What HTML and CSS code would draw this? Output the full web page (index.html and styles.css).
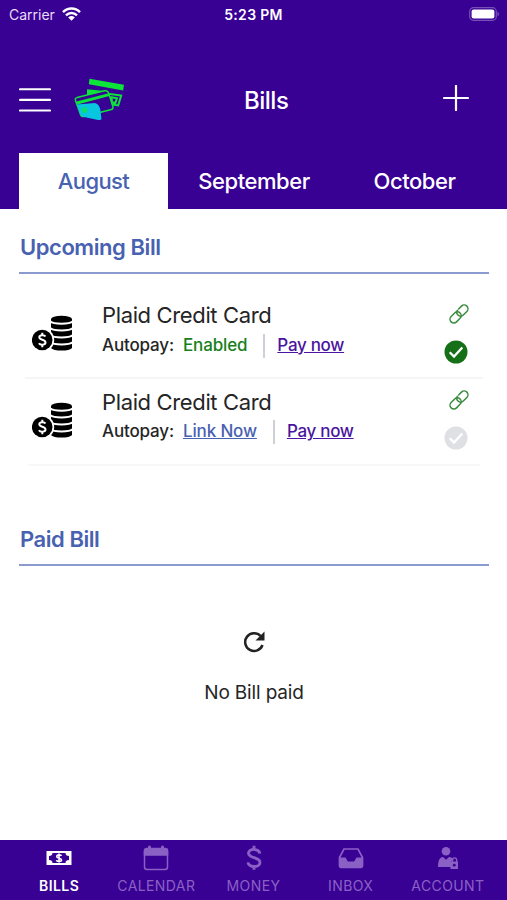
FILE: index.html
```html
<!DOCTYPE html>
<html lang="en">
<head>
<meta charset="utf-8">
<title>Bills</title>
<link rel="stylesheet" href="styles.css">
</head>
<body>
<svg class="defs" width="0" height="0" aria-hidden="true">
  <symbol id="coins" viewBox="0 0 42 38">
    <path d="M19 4v29c2 3.400 19 3.400 21 0V4z"/>
    <ellipse cx="29.500" cy="4.200" rx="10.500" ry="3.400"/>
    <path d="M18 6.200c4 3.300 19 3.300 23 0M18 13c4 3.300 19 3.300 23 0M18 20c4 3.300 19 3.300 23 0M18 27c4 3.300 19 3.300 23 0" fill="none" stroke="#fff" stroke-width="2.100"/>
    <circle cx="10.200" cy="25" r="12" fill="#fff"/>
    <circle cx="10.200" cy="25" r="10.300"/>
    <path d="M13.500 21.600c-1.200-2-6.200-1.800-6.200.7 0 3 6.200 2 6.200 5.200 0 2.600-5.200 2.900-6.600.7M10.300 17.800v2.500M10.300 29.600v2.600" fill="none" stroke="#fff" stroke-width="2"/>
  </symbol>
  <symbol id="chain" viewBox="0 0 22 22">
    <g fill="none" stroke="currentColor" stroke-width="1.500" stroke-linecap="round">
      <rect x="9.500" y="7.200" width="12.600" height="7.600" rx="3.800" transform="rotate(-45 11 11)" stroke-dasharray="31.500 2.200" stroke-dashoffset="-1"/>
      <rect x="-.1" y="7.200" width="12.600" height="7.600" rx="3.800" transform="rotate(-45 11 11)"/>
    </g>
  </symbol>
  <symbol id="check" viewBox="0 0 24 24">
    <circle cx="12" cy="12" r="11.500" fill="currentColor"/>
    <path d="M5.700 12.200l4.300 4.300 8.300-9.100" fill="none" stroke="#fff" stroke-width="2.300"/>
  </symbol>
</svg>

<header class="header">
  <div class="status">
    <div class="carrier">
      <span>Carrier</span>
      <svg width="19" height="14" viewBox="0 0 19 14" fill="none" stroke="#fff" stroke-width="2.500">
        <path d="M1 5.200c4.800-4.900 12.200-4.900 17 0M4 8.300c3.200-3.100 7.800-3.100 11 0"/>
        <path d="M6.200 10.400c2-1.800 4.600-1.800 6.600 0L9.500 13.800z" fill="#fff" stroke="none"/>
      </svg>
    </div>
    <span class="clock">5:23 PM</span>
    <svg class="battery" width="31" height="14" viewBox="0 0 31 14">
      <rect x=".7" y=".7" width="26.600" height="12.600" rx="3.800" fill="none" stroke="#7650b8" stroke-width="1.200"/>
      <rect x="2.600" y="2.600" width="22.800" height="8.800" rx="2" fill="#fff"/>
      <path d="M28.500 4.700c2 .8 2 3.800 0 4.600z" fill="#7650b8"/>
    </svg>
  </div>
  <div class="topbar">
    <div class="brand">
      <svg width="32" height="26" viewBox="0 0 32 26" stroke="#fff" stroke-width="2.100" stroke-linecap="round"><path d="M1 2.300h30M1 12.900h30M1 23.500h30"/></svg>
      <svg class="logo" width="52" height="46" viewBox="0 0 52 46">
        <path d="M15.500 1.800L50 7.700l-.8 5.800L14.800 7.300z" fill="#0ce43a"/>
        <path d="M13 12.200l18 1.700 4 3.800-22 2z" fill="#0ce43a"/>
        <path d="M34 16.700l13.200 1.800-3 10-6-.9M37.500 20.300l5.500 1-1.700 4.700-3.300-.7z" fill="none" stroke="#0ce43a" stroke-width="2"/>
        <path d="M3 20.600l27.500-6.800c2.300-.5 3.500.3 4.200 2.600l4.200 13.300c.5 1.500-.1 2.400-1.500 2.700L10 39.500c-2 .4-3-.3-3.600-2.300L1.500 23.500c-.5-1.700 0-2.500 1.500-2.900z" fill="#390094" stroke="#0ce43a" stroke-width="1.500"/>
        <path d="M3 26l32-8.400" stroke="#0ce43a" stroke-width="3"/>
        <path d="M3 27.500l18-1.500c3.300 1.200 4.700 3.600 5.300 6.500L27.500 42c-1 1.400-2.500 1.200-4.500.8l-13-2.800c-2.300-.5-3.800-2-4.500-4.500z" fill="#08c5e0"/>
        <circle cx="10.500" cy="33" r="3" fill="#0ddd70"/>
      </svg>
    </div>
    <h1 class="title">Bills</h1>
    <svg class="plus" width="26" height="26" viewBox="0 0 26 26" stroke="#fff" stroke-width="2.200" stroke-linecap="round"><path d="M13 1v24M1 13h24"/></svg>
  </div>
  <nav class="tabs">
    <a class="tab tab-active">August</a>
    <a class="tab">September</a>
    <a class="tab">October</a>
  </nav>
</header>

<main class="content">
  <h2 class="heading">Upcoming Bill</h2>
  <ul class="bills">
    <li class="bill">
      <svg class="coins" width="42" height="38"><use href="#coins"/></svg>
      <div class="info">
        <div class="name">Plaid Credit Card</div>
        <div class="meta"><span class="label">Autopay:</span><span class="enabled">Enabled</span><i class="bar"></i><a class="pay">Pay now</a></div>
      </div>
      <div class="marks">
        <svg class="chain" width="22" height="22"><use href="#chain"/></svg>
        <svg class="check done" width="24" height="24"><use href="#check"/></svg>
      </div>
    </li>
    <li class="bill last">
      <svg class="coins" width="42" height="38"><use href="#coins"/></svg>
      <div class="info">
        <div class="name">Plaid Credit Card</div>
        <div class="meta"><span class="label">Autopay:</span><a class="link">Link Now</a><i class="bar"></i><a class="pay">Pay now</a></div>
      </div>
      <div class="marks">
        <svg class="chain" width="22" height="22"><use href="#chain"/></svg>
        <svg class="check" width="24" height="24"><use href="#check"/></svg>
      </div>
    </li>
  </ul>
  <h2 class="heading paid">Paid Bill</h2>
  <div class="empty">
    <svg width="22" height="22" viewBox="0 0 22 22"><path d="M19.500 14A8.900 8.900 0 1 1 17.600 5" fill="none" stroke="#222" stroke-width="2.500"/><path d="M21.500.5v9h-9z" fill="#222"/></svg>
    <p>No Bill paid</p>
  </div>
</main>

<footer class="nav">
  <a class="item active">
    <svg width="26" height="28" viewBox="0 0 26 28"><path d="M.5 7h25v14H.5z" fill="#fff"/><path d="M6.500 9h13c0 1.800 1.300 3 3.500 3v4c-2.200 0-3.500 1.200-3.500 3h-13c0-1.800-1.300-3-3.500-3v-4c2.200 0 3.500-1.200 3.500-3z" fill="#390094"/><path d="M15.500 11.900c-1-1.500-4.800-1.300-4.800.5 0 2.300 4.800 1.300 4.800 3.500 0 1.900-4 2-5.200.3M13 9.600v8.800" fill="none" stroke="#fff" stroke-width="1.600"/></svg>
    <span>BILLS</span>
  </a>
  <a class="item">
    <svg width="26" height="28" viewBox="0 0 26 28" fill="none" stroke="currentColor" stroke-width="1.500"><rect x="1.500" y="5" width="23" height="20.500" rx="2.500"/><path d="M3.500 4.500h19a2 2 0 0 1 2 2V11h-23V6.500a2 2 0 0 1 2-2z" fill="currentColor"/><path d="M6.500 3v3M19.500 3v3" stroke-width="3" stroke-linecap="round"/></svg>
    <span>CALENDAR</span>
  </a>
  <a class="item">
    <svg width="26" height="28" viewBox="0 0 26 28" fill="none" stroke="currentColor" stroke-width="2.900"><path d="M18.800 9.600C18 4 7.500 4.200 7.500 9.200c0 5.500 11.500 3.500 11.500 9.200 0 5.300-11.500 5.500-12 0M13 1.800v4M13 21.800v4"/></svg>
    <span>MONEY</span>
  </a>
  <a class="item">
    <svg width="26" height="28" viewBox="0 0 26 28"><path d="M6 5h14l4.500 8.500V22c0 .8-.6 1.300-1.300 1.300H2.800c-.7 0-1.300-.5-1.300-1.300v-8.500z" fill="none" stroke="currentColor" stroke-width="1.700"/><path d="M1 13.500h6.500l2.300 4h6.400l2.300-4H25V23H1z" fill="currentColor"/></svg>
    <span>INBOX</span>
  </a>
  <a class="item">
    <svg width="26" height="28" viewBox="0 0 26 28" fill="currentColor"><circle cx="11" cy="7.300" r="4.300"/><path d="M3 23c0-6 1.500-9.600 5-9.900l3 2.700 3-2.700c2.500.2 4 1.200 4.500 2.900-1.600.2-2.500 1.100-2.500 2.600V23z"/><path d="M17.500 18v-1.800c0-3.100 4.200-3.100 4.200 0V18" fill="none" stroke="currentColor" stroke-width="1.300"/><path d="M15.500 17.500H23V25h-7.500z"/><circle cx="19.300" cy="21.200" r="1.400" fill="#390094"/></svg>
    <span>ACCOUNT</span>
  </a>
</footer>
</body>
</html>
```
FILE: styles.css
```css
* { box-sizing: border-box; }
body {
  margin: 0;
  height: 900px;
  display: flex;
  flex-direction: column;
  background: #fff;
  color: #252525;
  font-family: Inter, "Liberation Sans", sans-serif;
}
h1, h2, p, ul { margin: 0; padding: 0; list-style: none; }
svg { display: block; flex: none; }
.defs { position: absolute; }
.header {
  height: 209px;
  background: #390094;
  color: #fff;
  display: flex;
  flex-direction: column;
}
.status {
  height: 28px;
  padding: 0 7px 0 9px;
  display: grid;
  grid-template-columns: 1fr auto 1fr;
  align-items: center;
  font-size: 14px;
}
.carrier { display: flex; align-items: center; gap: 7px; color: #e8ddf8; }
.carrier svg { margin-top: -1px; }
.clock { font-weight: 600; letter-spacing: .3px; margin-left: -2px; }
.battery { justify-self: end; margin-top: -1px; }
.topbar {
  flex: 1;
  padding: 19px 38px 0 19px;
  display: grid;
  grid-template-columns: 225px 1fr 26px;
  align-items: center;
}
.brand { display: flex; align-items: center; gap: 23px; }
.title { font-size: 24px; font-weight: 500; letter-spacing: -.5px; }
.plus { margin-top: -4px; }
.tabs {
  height: 56px;
  padding: 0 18px 0 19px;
  display: grid;
  grid-template-columns: 149px 172px 149px;
}
.tab {
  display: flex;
  align-items: center;
  justify-content: center;
  font-size: 22px;
  font-weight: 500;
  letter-spacing: -.45px;
}
.tab-active { background: #fff; color: #4961b1; letter-spacing: -.6px; }
.content { flex: 1; padding: 23px 18px 0 19px; }
.heading {
  height: 42px;
  padding-left: 1px;
  border-bottom: 2px solid #8b9bd0;
  color: #4961b1;
  font-size: 22px;
  line-height: 30px;
  font-weight: 600;
  letter-spacing: -.44px;
}
.bills { padding: 18px 6px 0; }
.bill {
  height: 87px;
  padding: 9px 12px 0 7px;
  border-bottom: 2px solid #f5f5f6;
  display: flex;
}
.last { height: 87px; padding: 9px 9px 0 4px; margin: 0 3px; border-color: #f8f8f9; }
.last .marks { margin-top: -1px; }
.coins { margin-top: 14px; }
.info { flex: 1; margin-left: 28px; }
.name { font-size: 22px; line-height: 28px; letter-spacing: -.36px; }
.meta { display: flex; align-items: center; height: 31px; font-size: 17px; font-weight: 500; letter-spacing: -.15px; }
.last .meta { height: 30px; }
.enabled, .link { margin-left: 9px; }
.enabled { color: #17801b; }
.link { color: #4961b1; text-decoration: underline; }
.bar { width: 2px; height: 24px; margin: 2px 12px 0 16px; background: #cfcfd8; }
.pay { color: #4a14a0; text-decoration: underline; letter-spacing: -.3px; }
.marks { display: flex; flex-direction: column; align-items: flex-end; gap: 15px; color: #dfe0e4; }
.chain { color: #3b8c3e; margin: 2px 1px 0 0; }
.check { margin-right: 3px; }
.done { color: #167018; }
.paid { margin-top: 58px; letter-spacing: -.45px; }
.empty { display: flex; flex-direction: column; align-items: center; padding-top: 65px; gap: 27px; font-size: 19px; line-height: 26px; letter-spacing: -.15px; }
.nav {
  height: 60px;
  background: #390094;
  display: grid;
  grid-template-columns: repeat(5, 97.2px);
  justify-content: center;
  color: #8a60c5;
}
.item { display: flex; flex-direction: column; align-items: center; padding-top: 4px; font-size: 14px; line-height: 18px; gap: 5px; letter-spacing: .4px; }
.active { color: #fff; font-weight: 600; }
```
